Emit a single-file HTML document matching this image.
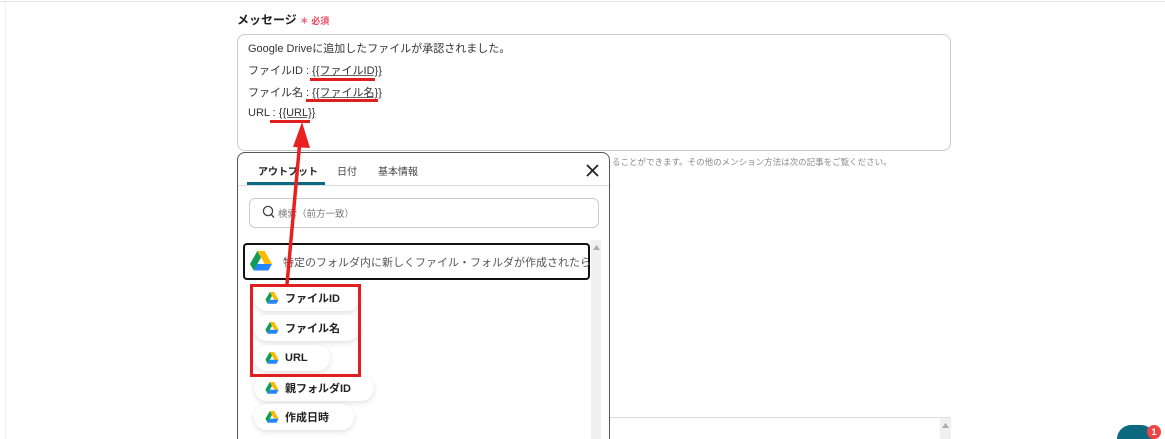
<!DOCTYPE html>
<html style="height:439px;overflow:hidden"><head><meta charset="utf-8"><style>
body{margin:0;width:1165px;height:439px;overflow:hidden;background:#fff;position:relative;font-family:"Liberation Sans","Noto Sans CJK JP",sans-serif;}
.a{position:absolute;}
.t{font-size:11px;line-height:16px;color:#333;white-space:nowrap;}
.t u{text-decoration-color:#666}
.pill{position:absolute;left:254px;height:26px;border-radius:13px;background:#fff;box-shadow:0 2px 6px rgba(0,0,0,.12);font-size:11px;font-weight:bold;color:#222;display:flex;align-items:center;padding-left:11px;box-sizing:border-box;white-space:nowrap;}
.pill svg{margin-right:6px;}
.ul{position:absolute;height:3px;background:#e02020;}
</style></head><body>
<div class="a" style="left:0;top:1px;width:1165px;height:1px;background:#e6e6e6"></div>
<div class="a" style="left:5px;top:0;width:1px;height:439px;background:#f0f0f0"></div>
<div class="a" style="left:237px;top:11px;font-size:12px;font-weight:bold;color:#222">メッセージ<span style="color:#e84a5f;font-size:9px;margin-left:3px">＊ 必須</span></div>
<div class="a" style="left:237px;top:34px;width:712px;height:115px;border:1px solid #ccc;border-radius:8px"></div>
<div class="a t" style="left:248px;top:41px">Google Driveに追加したファイルが承認されました。</div>
<div class="a t" style="left:248px;top:63px">ファイルID : <u>{{ファイルID}}</u></div>
<div class="a t" style="left:248px;top:85px">ファイル名 : <u>{{ファイル名}}</u></div>
<div class="a t" style="left:248px;top:105px">URL : <u>{{URL}}</u></div>
<div class="ul" style="left:310px;top:78px;width:65px"></div>
<div class="ul" style="left:306px;top:99px;width:72px"></div>
<div class="ul" style="left:270px;top:120px;width:40px"></div>
<div class="a" style="left:612px;top:156px;font-size:8.5px;color:#888;white-space:nowrap">ることができます。その他のメンション方法は次の記事をご覧ください。</div>
<div class="a" style="left:610px;top:417px;width:340px;height:22px;border-top:1px solid #ddd;box-sizing:border-box"></div>
<div class="a" style="left:940px;top:418px;width:11px;height:21px;background:#f0f0f0"></div>
<svg class="a" style="left:942px;top:423px" width="7" height="5"><path d="M0 5L3.5 0L7 5Z" fill="#aaa"/></svg>
<div class="a" style="left:1117px;top:425px;width:38px;height:14px;border-radius:19px 19px 0 0;background:#0b6a80"></div>
<div class="a" style="left:1147px;top:425px;width:14px;height:14px;border-radius:50%;background:#f04545;color:#fff;font-size:9px;font-weight:bold;text-align:center;line-height:14px">1</div>
<div class="a" style="left:237px;top:152px;width:373px;height:287px;border:1px solid #555;border-bottom:none;border-radius:8px 8px 0 0;background:#fff;box-sizing:border-box"></div>
<div class="a" style="left:258px;top:163px;font-size:10px;font-weight:bold;color:#222">アウトプット</div>
<div class="a" style="left:337px;top:163px;font-size:10px;color:#444">日付</div>
<div class="a" style="left:378px;top:163px;font-size:10px;color:#444">基本情報</div>
<div class="a" style="left:247px;top:182px;width:78px;height:3px;background:#0b6a80"></div>
<div class="a" style="left:238px;top:185px;width:371px;height:1px;background:#ddd"></div>
<svg class="a" style="left:586px;top:164px" width="13" height="13"><path d="M1 1L12 12M12 1L1 12" stroke="#222" stroke-width="1.8"/></svg>
<div class="a" style="left:249px;top:198px;width:348px;height:28px;border:1px solid #ccc;border-radius:6px"></div>
<svg class="a" style="left:262px;top:205px" width="13" height="14"><circle cx="6" cy="6" r="4.6" fill="none" stroke="#444" stroke-width="1.3"/><path d="M9.3 9.5L12 12.5" stroke="#444" stroke-width="1.4"/></svg>
<div class="a" style="left:278px;top:206px;font-size:9.5px;color:#777">検索（前方一致）</div>
<div class="a" style="left:591px;top:240px;width:10px;height:199px;background:#f0f0f0"></div>
<svg class="a" style="left:593px;top:245px" width="7" height="5"><path d="M0 5L3.5 0L7 5Z" fill="#aaa"/></svg>
<div class="a" style="left:243px;top:243px;width:347px;height:37px;border:2px solid #111;border-radius:4px;box-sizing:border-box"></div>
<svg class="a" style="left:250px;top:251px" width="22" height="20" viewBox="0 0 22 20"><path d="M7.3 0H14.7L22 13H14.7Z" fill="#ffba00"/><path d="M7.3 0L0 13L3.7 19.5L11 6.5Z" fill="#0f9d58"/><path d="M3.7 19.5H18.3L22 13H7.3Z" fill="#2684fc"/></svg>
<div class="a" style="left:283px;top:254px;font-size:11px;color:#555;white-space:nowrap">特定のフォルダ内に新しくファイル・フォルダが作成されたら</div>
<div class="pill" style="top:285px;width:106px"><svg width="14" height="12" viewBox="0 0 22 20"><path d="M7.3 0H14.7L22 13H14.7Z" fill="#ffba00"/><path d="M7.3 0L0 13L3.7 19.5L11 6.5Z" fill="#0f9d58"/><path d="M3.7 19.5H18.3L22 13H7.3Z" fill="#2684fc"/></svg>ファイルID</div>
<div class="pill" style="top:315px;width:106px"><svg width="14" height="12" viewBox="0 0 22 20"><path d="M7.3 0H14.7L22 13H14.7Z" fill="#ffba00"/><path d="M7.3 0L0 13L3.7 19.5L11 6.5Z" fill="#0f9d58"/><path d="M3.7 19.5H18.3L22 13H7.3Z" fill="#2684fc"/></svg>ファイル名</div>
<div class="pill" style="top:345px;width:76px"><svg width="14" height="12" viewBox="0 0 22 20"><path d="M7.3 0H14.7L22 13H14.7Z" fill="#ffba00"/><path d="M7.3 0L0 13L3.7 19.5L11 6.5Z" fill="#0f9d58"/><path d="M3.7 19.5H18.3L22 13H7.3Z" fill="#2684fc"/></svg>URL</div>
<div class="pill" style="top:375px;width:120px"><svg width="14" height="12" viewBox="0 0 22 20"><path d="M7.3 0H14.7L22 13H14.7Z" fill="#ffba00"/><path d="M7.3 0L0 13L3.7 19.5L11 6.5Z" fill="#0f9d58"/><path d="M3.7 19.5H18.3L22 13H7.3Z" fill="#2684fc"/></svg>親フォルダID</div>
<div class="pill" style="top:404px;width:100px"><svg width="14" height="12" viewBox="0 0 22 20"><path d="M7.3 0H14.7L22 13H14.7Z" fill="#ffba00"/><path d="M7.3 0L0 13L3.7 19.5L11 6.5Z" fill="#0f9d58"/><path d="M3.7 19.5H18.3L22 13H7.3Z" fill="#2684fc"/></svg>作成日時</div>
<div class="a" style="left:250px;top:284px;width:105px;height:87px;border:3px solid #e02020"></div>
<svg class="a" style="left:0;top:0" width="1165" height="439"><path d="M287 284L300 140" stroke="#e82020" stroke-width="3.5"/><path d="M302 122L293 147L310 148Z" fill="#e82020"/></svg>
</body></html>
